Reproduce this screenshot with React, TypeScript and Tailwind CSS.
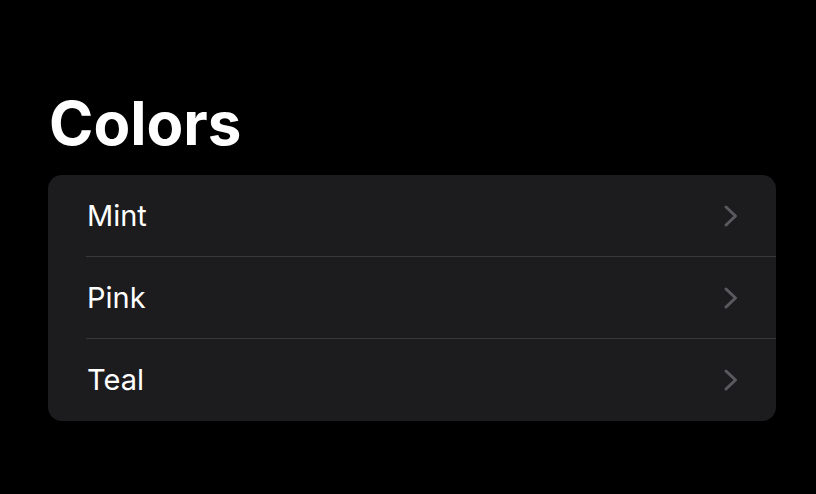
import React from 'react'

const items = ['Mint', 'Pink', 'Teal']

const Chevron = () => (
  <svg width="16" height="24" viewBox="0 0 16 24" fill="none">
    <path d="M3 3 L12.5 12 L3 21" stroke="#5a5a5e" strokeWidth="3" strokeLinecap="round" strokeLinejoin="round" />
  </svg>
)

const App = () => {
  return (
    <div className="w-[816px] h-[494px] bg-black pt-[93px] pl-[48px] pr-[40px] font-['Inter',sans-serif]">
      <h1 className="text-white text-[60px] leading-[60px] font-bold pl-[1px]">Colors</h1>
      <div className="mt-[22px] bg-[#1c1c1e] rounded-[14px] overflow-hidden">
        {items.map((item, i) => (
          <div key={item} className="pl-[38px]">
            <div
              className={
                'h-[82px] flex items-center justify-between pr-[37px] ' +
                (i < items.length - 1 ? 'border-b border-[#38383a]' : '')
              }
            >
              <span className="text-white text-[29px] pl-[1px]">{item}</span>
              <Chevron />
            </div>
          </div>
        ))}
      </div>
    </div>
  )
}

export default App
